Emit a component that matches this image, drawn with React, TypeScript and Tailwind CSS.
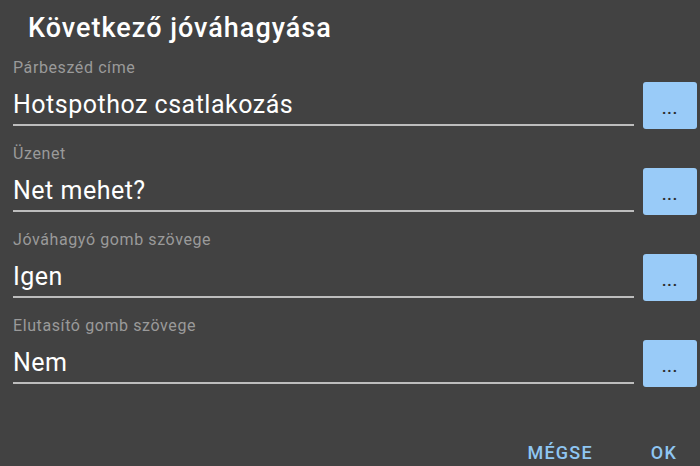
const fields = [
  { label: "Párbeszéd címe", value: "Hotspothoz csatlakozás" },
  { label: "Üzenet", value: "Net mehet?" },
  { label: "Jóváhagyó gomb szövege", value: "Igen" },
  { label: "Elutasító gomb szövege", value: "Nem" },
];

function Field({ label, value }: { label: string; value: string }) {
  return (
    <div className="flex flex-col mt-[15px]">
      <div className="pl-[13px] text-[16px] leading-[20px] tracking-[0.6px] text-[#9a9a9a]">{label}</div>
      <div className="flex items-start mt-[4px]">
        <div className="flex-1 flex flex-col pl-[13px] pt-[9px]">
          <div className="text-[25px] leading-[28px] tracking-[0.5px] text-white">{value}</div>
          <div className="mt-[5px] h-[2px] bg-[#bdbdbd]" />
        </div>
        <button className="ml-[9px] mr-[3px] w-[54px] h-[47px] rounded-[3px] bg-[#99cbf8] flex items-center justify-center">
          <span className="text-[15px] font-bold text-[#2a2a2a] leading-none pt-[8px] tracking-[1px]">...</span>
        </button>
      </div>
    </div>
  );
}

export default function App() {
  return (
    <div className="w-[700px] h-[466px] bg-[#424242] flex flex-col font-['Roboto',sans-serif] overflow-hidden">
      <h1 className="mt-[13px] pl-[28px] text-[27px] leading-[30px] tracking-[1px] font-medium text-white">
        Következő jóváhagyása
      </h1>
      {fields.map((f) => (
        <Field key={f.label} label={f.label} value={f.value} />
      ))}
      <div className="flex justify-end items-center mt-auto mb-[2px] pr-[23px] gap-[58px]">
        <span className="text-[18px] leading-[22px] tracking-[1.2px] font-medium text-[#8fc6f2]">MÉGSE</span>
        <span className="text-[18px] leading-[22px] tracking-[1.2px] font-medium text-[#8fc6f2]">OK</span>
      </div>
    </div>
  );
}
